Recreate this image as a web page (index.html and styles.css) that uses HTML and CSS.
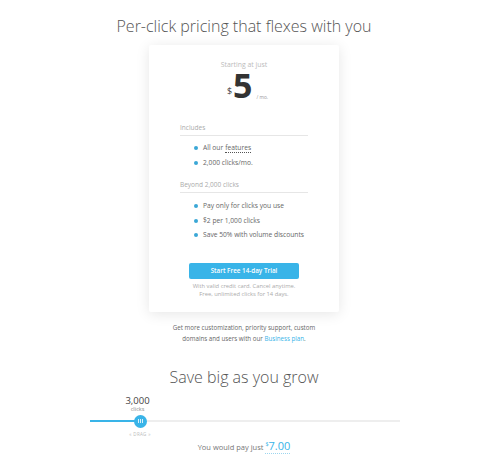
FILE: index.html
```html
<!DOCTYPE html>
<html lang="en">

<head>
    <meta charset="UTF-8">
    <meta name="viewport" content="width=device-width, initial-scale=1.0">
    <link rel="stylesheet" href="styles.css">
</head>

<body>
    <div class="page">
        <h1 class="headline">Per-click pricing that flexes with you</h1>

        <div class="plan-card">
            <p class="plan-lead">Starting at just</p>
            <div class="plan-price">
                <span class="currency">$</span>
                <span class="amount">5</span>
                <span class="period">/ mo.</span>
            </div>

            <h3 class="plan-section">Includes</h3>
            <ul class="plan-list">
                <li>All our <span class="dotted">features</span></li>
                <li>2,000 clicks/mo.</li>
            </ul>

            <h3 class="plan-section">Beyond 2,000 clicks</h3>
            <ul class="plan-list">
                <li>Pay only for clicks you use</li>
                <li>$2 per 1,000 clicks</li>
                <li>Save 50% with volume discounts</li>
            </ul>

            <button class="trial-btn">Start Free 14-day Trial</button>
            <p class="plan-note">With valid credit card. Cancel anytime.<br>Free, unlimited clicks for 14 days.</p>
        </div>

        <p class="upsell">Get more customization, priority support, custom<br>domains and users with our <a href="#">Business plan</a>.</p>

        <h2 class="headline grow">Save big as you grow</h2>

        <div class="estimator">
            <div class="slider">
                <div class="slider-value">
                    <span class="clicks-num">3,000</span>
                    <span class="clicks-label">clicks</span>
                </div>
                <div class="track">
                    <div class="track-fill" style="width: 50px;"></div>
                    <div class="handle"><span></span><span></span><span></span></div>
                </div>
                <div class="drag-hint">&laquo; DRAG &raquo;</div>
            </div>
            <p class="estimate">You would pay just <span class="estimate-price"><sup>$</sup>7.00</span></p>
        </div>
    </div>
</body>

</html>
```

FILE: styles.css
```css
body {
    margin: 0;
    font-family: 'Open Sans', 'Liberation Sans', sans-serif;
    background-color: #fff;
    color: #555;
}

.page {
    width: 488px;
    padding-top: 15px;
}

.headline {
    margin: 0;
    text-align: center;
    font-size: 16px;
    font-weight: 300;
    color: #555;
    line-height: 22px;
}

/* pricing card */
.plan-card {
    width: 190px;
    box-sizing: border-box;
    margin: 8px auto 0;
    padding: 15px 31px 14px;
    background-color: #fff;
    box-shadow: 0 2px 14px rgba(0, 0, 0, 0.1);
    border-radius: 2px;
}

.plan-lead {
    margin: 0;
    text-align: center;
    font-size: 6.9px;
    color: #bbb;
    line-height: 10px;
}

.plan-price {
    display: flex;
    justify-content: center;
    align-items: flex-end;
    height: 30px;
    padding-left: 7px;
}

.currency {
    font-size: 9px;
    line-height: 9px;
    color: #444;
    margin-bottom: 5.5px;
    margin-right: 1px;
}

.amount {
    font-size: 34px;
    font-weight: 700;
    color: #333;
    line-height: 30px;
}

.period {
    font-size: 4.8px;
    line-height: 6px;
    color: #999;
    margin-left: 4px;
    margin-bottom: 0.5px;
}

.plan-section {
    margin: 23px 0 0;
    padding-bottom: 2px;
    border-bottom: 1px solid #e6e6e6;
    font-size: 6.5px;
    font-weight: 400;
    color: #aaa;
    line-height: 10px;
}

.plan-list {
    list-style: none;
    margin: 5px 0 0;
    padding: 0 0 0 14px;
}

.plan-list li {
    display: flex;
    align-items: center;
    font-size: 6.7px;
    line-height: 14.5px;
    color: #666;
}

.plan-list li::before {
    content: "";
    width: 4px;
    height: 4px;
    border-radius: 50%;
    background-color: #3aa7d6;
    margin-right: 5px;
}

.dotted {
    border-bottom: 1px dotted #555;
    line-height: 8px;
    margin-left: 2px;
}

.plan-list + .plan-section {
    margin-top: 10px;
}

.plan-section + .plan-list {
    margin-top: 6px;
}

.plan-section:first-of-type + .plan-list {
    margin-top: 5px;
}

.trial-btn {
    display: block;
    width: 110px;
    height: 16px;
    margin: 20px auto 0;
    padding: 0;
    border: none;
    border-radius: 2px;
    background-color: #39b4e8;
    color: #fff;
    font-family: inherit;
    font-size: 6.3px;
    font-weight: 600;
}

.plan-note {
    margin: 4.5px 0 0;
    text-align: center;
    font-size: 5.8px;
    line-height: 7.5px;
    color: #aaa;
}

.upsell {
    margin: 9.5px 0 0;
    text-align: center;
    font-size: 6.2px;
    line-height: 11px;
    color: #666;
}

.upsell a {
    color: #39b4e8;
    text-decoration: none;
}

.grow {
    margin-top: 22.5px;
}

/* savings estimator */
.slider {
    display: flex;
    flex-direction: column;
    width: 310px;
    margin: 6.5px 0 0 90px;
}

.slider-value {
    display: flex;
    flex-direction: column;
    align-items: center;
    width: 50px;
    margin-left: 22.5px;
}

.clicks-num {
    font-size: 9.5px;
    line-height: 11px;
    color: #444;
}

.clicks-label {
    font-size: 5.5px;
    line-height: 6px;
    color: #888;
}

.track {
    position: relative;
    height: 2px;
    margin-top: 8.5px;
    background-color: #eee;
}

.track-fill {
    height: 2px;
    background-color: #39b4e8;
}

.handle {
    position: absolute;
    left: 43.5px;
    top: -5.5px;
    width: 13px;
    height: 13px;
    border-radius: 50%;
    background-color: #39b4e8;
    display: flex;
    justify-content: center;
    align-items: center;
    gap: 1px;
}

.handle span {
    width: 1px;
    height: 4px;
    background-color: rgba(255, 255, 255, 0.8);
}

.drag-hint {
    width: 50px;
    margin: 9px 0 0 25px;
    text-align: center;
    font-size: 4.5px;
    line-height: 6px;
    letter-spacing: 0.3px;
    color: #bbb;
}

.estimate {
    margin: 2px 0 0;
    text-align: center;
    font-size: 7.5px;
    line-height: 14px;
    color: #777;
}

.estimate-price {
    font-size: 11px;
    color: #39b4e8;
    border-bottom: 1px dotted #9dd6ef;
}

.estimate-price sup {
    font-size: 5.5px;
    line-height: 0;
    vertical-align: 4px;
}
```
